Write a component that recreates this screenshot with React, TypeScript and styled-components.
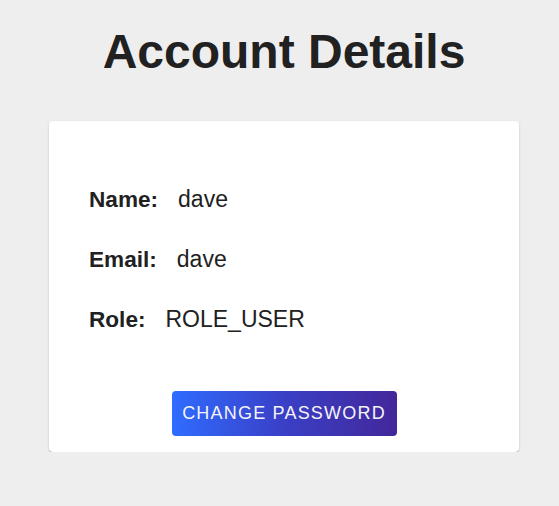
import React from 'react'
import styled, { createGlobalStyle } from 'styled-components'

const GlobalStyle = createGlobalStyle`
  html, body {
    margin: 0;
    padding: 0;
    background: #eeeeee;
    font-family: 'Liberation Sans', Arial, sans-serif;
    color: #212121;
  }
`

const Page = styled.div`
  display: flex;
  flex-direction: column;
  align-items: center;
  padding: 0 0 0 9px;
`

const Title = styled.h1`
  margin: 24px 0 0;
  font-size: 48px;
  line-height: 56px;
  font-weight: 700;
  color: #212121;
`

const Card = styled.div`
  box-sizing: border-box;
  width: 470px;
  margin-top: 41px;
  background: #ffffff;
  border-radius: 4px;
  box-shadow: 0 2px 1px -1px rgba(0, 0, 0, 0.2), 0 1px 1px 0 rgba(0, 0, 0, 0.14),
    0 1px 3px 0 rgba(0, 0, 0, 0.12);
  padding: 65px 40px 16px;
  display: flex;
  flex-direction: column;
`

const Rows = styled.div`
  display: flex;
  flex-direction: column;
  gap: 33px;
`

const Row = styled.div`
  display: flex;
  align-items: baseline;
  height: 27px;
  font-size: 22.6px;
  line-height: 27px;
`

const Label = styled.span`
  font-weight: 700;
`

const Value = styled.span`
  margin-left: 20px;
  font-size: 23px;
`

const Actions = styled.div`
  display: flex;
  justify-content: center;
  margin-top: 58px;
`

const Button = styled.button`
  width: 225px;
  height: 45px;
  border: 0;
  border-radius: 4px;
  background: linear-gradient(90deg, #2f6cff 0%, #3a3fc6 50%, #43279a 100%);
  color: #f4f4fb;
  font-family: 'Liberation Sans', Arial, sans-serif;
  font-size: 18px;
  letter-spacing: 1.2px;
  text-transform: uppercase;
  cursor: pointer;
`

const details = [
  { label: 'Name:', value: 'dave' },
  { label: 'Email:', value: 'dave' },
  { label: 'Role:', value: 'ROLE_USER' },
]

export default function App() {
  return (
    <>
      <GlobalStyle />
      <Page>
        <Title>Account Details</Title>
        <Card>
          <Rows>
            {details.map((d) => (
              <Row key={d.label}>
                <Label>{d.label}</Label>
                <Value>{d.value}</Value>
              </Row>
            ))}
          </Rows>
          <Actions>
            <Button>Change Password</Button>
          </Actions>
        </Card>
      </Page>
    </>
  )
}
